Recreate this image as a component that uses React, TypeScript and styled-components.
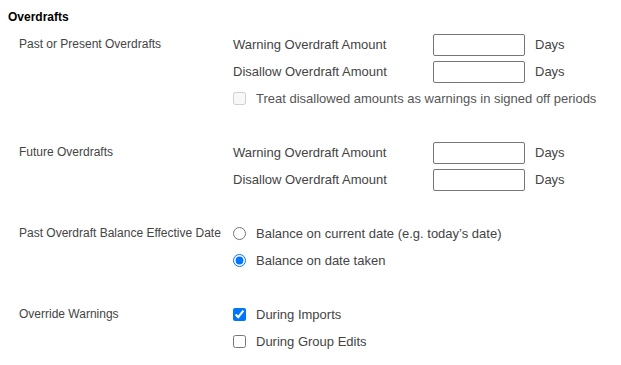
import React from "react";
import styled, { createGlobalStyle } from "styled-components";

const Global = createGlobalStyle`
  html, body { margin: 0; padding: 0; background: #fff; }
  body { font-family: "Liberation Sans", Arial, sans-serif; }
`;

const Page = styled.div`
  padding: 8px 0 0 8px;
  width: 621px;
  box-sizing: border-box;
`;

const Title = styled.div`
  font-size: 12px;
  font-weight: bold;
  color: #000;
  line-height: 18px;
  margin-bottom: 5px;
`;

const Section = styled.div`
  display: grid;
  grid-template-columns: 214px 1fr;
  padding-left: 11px;
  margin-bottom: 27px;
`;

const SectionLabel = styled.div`
  font-size: 12px;
  color: #444;
  line-height: 27px;
  white-space: nowrap;
`;

const Rows = styled.div`
  display: flex;
  flex-direction: column;
`;

const Row = styled.div`
  display: flex;
  align-items: center;
  height: 27px;
  font-size: 13px;
  color: #444;
  white-space: nowrap;
`;

const FieldLabel = styled.span`
  width: 200px;
`;

const TextBox = styled.input`
  width: 92px;
  height: 22px;
  box-sizing: border-box;
  border: 1px solid #767676;
  border-radius: 2px;
  margin: 0 10px 0 0;
  padding: 0 4px;
  font: inherit;
`;

const Check = styled.input`
  width: 13px;
  height: 13px;
  margin: 0 10px 0 0;
  flex: none;
`;

const OptionText = styled.span<{ $disabled?: boolean }>`
  color: ${(p) => (p.$disabled ? "#555" : "#444")};
`;

const AmountRow = ({ label }: { label: string }) => (
  <Row>
    <FieldLabel>{label}</FieldLabel>
    <TextBox type="text" />
    <span>Days</span>
  </Row>
);

export default function App() {
  return (
    <>
      <Global />
      <Page>
        <Title>Overdrafts</Title>
        <Section>
          <SectionLabel>Past or Present Overdrafts</SectionLabel>
          <Rows>
            <AmountRow label="Warning Overdraft Amount" />
            <AmountRow label="Disallow Overdraft Amount" />
            <Row>
              <Check type="checkbox" disabled />
              <OptionText $disabled>Treat disallowed amounts as warnings in signed off periods</OptionText>
            </Row>
          </Rows>
        </Section>
        <Section>
          <SectionLabel>Future Overdrafts</SectionLabel>
          <Rows>
            <AmountRow label="Warning Overdraft Amount" />
            <AmountRow label="Disallow Overdraft Amount" />
          </Rows>
        </Section>
        <Section>
          <SectionLabel>Past Overdraft Balance Effective Date</SectionLabel>
          <Rows>
            <Row>
              <Check type="radio" name="bal" />
              <OptionText>Balance on current date (e.g. today’s date)</OptionText>
            </Row>
            <Row>
              <Check type="radio" name="bal" defaultChecked />
              <OptionText>Balance on date taken</OptionText>
            </Row>
          </Rows>
        </Section>
        <Section>
          <SectionLabel>Override Warnings</SectionLabel>
          <Rows>
            <Row>
              <Check type="checkbox" defaultChecked />
              <OptionText>During Imports</OptionText>
            </Row>
            <Row>
              <Check type="checkbox" />
              <OptionText>During Group Edits</OptionText>
            </Row>
          </Rows>
        </Section>
      </Page>
    </>
  );
}
